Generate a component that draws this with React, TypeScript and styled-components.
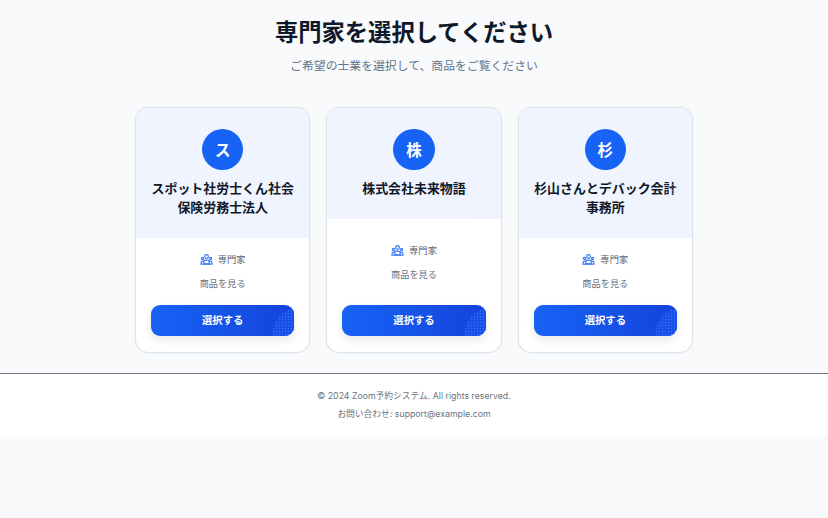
import { createGlobalStyle, styled } from 'styled-components'

const GlobalStyle = createGlobalStyle`
  html, body {
    margin: 0;
    padding: 0;
    background: #f8fafc;
    font-family: Inter, "Noto Sans CJK JP", sans-serif;
  }
  * { box-sizing: border-box; }
`

const experts = [
  { id: 1, initial: 'ス', name: 'スポット社労士くん社会保険労務士法人' },
  { id: 2, initial: '株', name: '株式会社未来物語' },
  { id: 3, initial: '杉', name: '杉山さんとデバック会計事務所' },
]

function TeamIcon() {
  return (
    <svg width="13" height="13" viewBox="0 0 24 24" fill="none" stroke="#3b78f2" strokeWidth="2.2" strokeLinecap="round" strokeLinejoin="round">
      <circle cx="12" cy="6.5" r="3.5" />
      <circle cx="4.5" cy="10" r="2" />
      <circle cx="19.5" cy="10" r="2" />
      <path d="M7 20v-4a3 3 0 0 1 3-3h4a3 3 0 0 1 3 3v4z" />
      <path d="M2 20v-2.500a2.500 2.500 0 0 1 2.500-2.500H7M22 20v-2.500a2.500 2.500 0 0 0-2.500-2.500H17M1.500 20.500h21" />
    </svg>
  )
}

export default function App() {
  return (
    <>
      <GlobalStyle />
      <Main>
        <Title>専門家を選択してください</Title>
        <Subtitle>ご希望の士業を選択して、商品をご覧ください</Subtitle>
        <CardGrid>
          {experts.map((expert) => (
            <Card key={expert.id}>
              <CardHead>
                <Avatar>{expert.initial}</Avatar>
                <ExpertName>{expert.name}</ExpertName>
              </CardHead>
              <CardBody>
                <InfoGroup>
                  <RoleRow>
                    <TeamIcon />
                    <span>専門家</span>
                  </RoleRow>
                  <ProductsLabel>商品を見る</ProductsLabel>
                </InfoGroup>
                <SelectButton>選択する</SelectButton>
              </CardBody>
            </Card>
          ))}
        </CardGrid>
      </Main>
      <Footer>
        <FooterLine>© 2024 Zoom予約システム. All rights reserved.</FooterLine>
        <FooterLine>お問い合わせ: support@example.com</FooterLine>
      </Footer>
    </>
  )
}

const Main = styled.main`
  padding: 16px 0 20px;
`

const Title = styled.h1`
  margin: 0;
  font-size: 23.3px;
  line-height: 34px;
  font-weight: 700;
  color: #0f172a;
  text-align: center;
`

const Subtitle = styled.p`
  margin: 7px 0 0;
  font-size: 11.85px;
  line-height: 18px;
  color: #64748b;
  text-align: center;
`

const CardGrid = styled.div`
  display: flex;
  justify-content: center;
  gap: 16px;
  margin-top: 32px;
`

const Card = styled.article`
  width: 175.33px;
  height: 246px;
  display: flex;
  flex-direction: column;
  background: #fff;
  border: 1px solid #dfe3ea;
  border-radius: 13px;
  overflow: hidden;
  box-shadow: 0 0 0 0.5px #eceff4;
`

const CardHead = styled.div`
  position: relative;
  display: flex;
  flex-direction: column;
  align-items: center;
  padding: 20.5px 14px 21px;
  background-color: #eff4ff;
  &::after {
    content: '';
    position: absolute;
    top: 0;
    right: 0;
    bottom: 0;
    width: 36px;
    background-image: radial-gradient(#e8eef9 0.6px, transparent 0.7px);
    background-size: 3px 3px;
    mask-image: linear-gradient(90deg, transparent, #000);
  }
`

const Avatar = styled.div`
  width: 41.5px;
  height: 41.5px;
  border-radius: 50%;
  display: flex;
  align-items: center;
  justify-content: center;
  background: #1763f5;
  color: #fff;
  font-size: 15.5px;
  font-weight: 700;
`

const ExpertName = styled.h2`
  margin: 9px 0 0;
  font-size: 12.95px;
  line-height: 19px;
  font-weight: 700;
  color: #111827;
  text-align: center;
`

const CardBody = styled.div`
  display: flex;
  flex-direction: column;
  align-items: center;
  flex: 1;
  padding: 14px 15px 16px;
`

const InfoGroup = styled.div`
  display: flex;
  flex-direction: column;
  align-items: center;
  gap: 9px;
  margin: auto 0;
`

const RoleRow = styled.div`
  display: flex;
  align-items: center;
  gap: 5px;
  font-size: 9.3px;
  line-height: 15px;
  color: #5b6472;
`

const ProductsLabel = styled.p`
  margin: 0;
  font-size: 9.2px;
  line-height: 15px;
  color: #6b7280;
`

const SelectButton = styled.button`
  position: relative;
  flex: none;
  overflow: hidden;
  width: 100%;
  height: 31px;
  margin-top: 14px;
  padding: 0 0 3px;
  border: 0;
  border-radius: 9px;
  font: inherit;
  font-size: 10.35px;
  font-weight: 700;
  color: #fff;
  background: linear-gradient(90deg, #1763f5, #1443dd);
  box-shadow: 0 4px 8px rgba(15, 23, 42, 0.1);
  &::after {
    content: '';
    position: absolute;
    bottom: 0;
    right: 0;
    width: 22px;
    height: 27px;
    border-radius: 100% 0 0 0;
    background-color: #1a50ea;
    background-image: radial-gradient(#3f75f0 0.6px, transparent 0.8px);
    background-size: 3px 3px;
  }
`

const Footer = styled.footer`
  border-top: 1px solid #6b7280;
  background: #fff;
  padding: 15px 0 11px;
  text-align: center;
`

const FooterLine = styled.p`
  margin: 0 0 3px;
  font-size: 8.75px;
  line-height: 15px;
  color: #6b7280;
`
